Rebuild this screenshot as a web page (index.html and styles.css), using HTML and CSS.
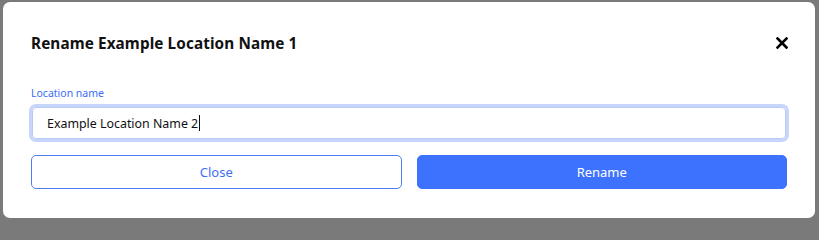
FILE: index.html
```html
<!DOCTYPE html>
<html lang="en">
<head>
<meta charset="utf-8">
<title>Rename location</title>
<link rel="stylesheet" href="styles.css">
</head>
<body>
<div class="backdrop">
  <div class="modal" role="dialog" aria-labelledby="modal-title">
    <div class="modal-header">
      <h2 id="modal-title" class="modal-title">Rename Example Location Name 1</h2>
      <button class="close-x" aria-label="Close">
        <svg width="12" height="12" viewBox="0 0 12 12"><path d="M1.5 1.5 L10.5 10.5 M10.5 1.5 L1.5 10.5" stroke="#000" stroke-width="2.6" stroke-linecap="square"/></svg>
      </button>
    </div>
    <label class="field-label" for="loc">Location name</label>
    <div class="input-ring">
      <div class="input" id="loc">Example Location Name 2<span class="caret"></span></div>
    </div>
    <div class="actions">
      <button class="btn btn-outline">Close</button>
      <button class="btn btn-primary">Rename</button>
    </div>
  </div>
</div>
</body>
</html>
```
FILE: styles.css
```css
html, body {
  margin: 0;
  padding: 0;
}
body {
  background: #7a7a7a;
  font-family: "Noto Sans", "Open Sans", sans-serif;
  min-height: 100vh;
}
.backdrop {
  padding: 2px 4px 4px 3px;
}
.modal {
  background: #fff;
  border-radius: 7px;
  padding: 28px 28px 29px 28px;
}
.modal-header {
  display: flex;
  align-items: center;
  justify-content: space-between;
  height: 26px;
}
.modal-title {
  margin: 0;
  font-size: 15.3px;
  font-weight: 700;
  color: #111;
  letter-spacing: 0.1px;
}
.close-x {
  border: 0;
  background: none;
  padding: 0;
  margin-right: -1px;
  width: 12px;
  height: 12px;
  display: flex;
}
.field-label {
  display: block;
  margin-top: 30px;
  font-size: 10.5px;
  line-height: 14px;
  color: #3b6cf7;
}
.input-ring {
  margin-top: 4px;
  margin-left: -2px;
  margin-right: -2px;
  border: 3px solid #c8d5fb;
  border-radius: 7px;
  background: #fff;
}
.input {
  border: 1px solid #b9c9f6;
  border-radius: 4px;
  height: 32px;
  box-sizing: border-box;
  padding: 0 0 0 14px;
  display: flex;
  align-items: center;
  font-size: 12.4px;
  color: #111;
}
.caret {
  display: inline-block;
  width: 1px;
  height: 16px;
  background: #111;
  margin-left: 1px;
}
.actions {
  margin-top: 13px;
  display: grid;
  grid-template-columns: 1fr 1fr;
  gap: 15px;
}
.btn {
  height: 34px;
  border-radius: 5px;
  font-family: inherit;
  font-size: 13px;
  cursor: pointer;
}
.btn-outline {
  background: #fff;
  border: 1px solid #4f7cf5;
  color: #3d6ef8;
}
.btn-primary {
  background: #3d72ff;
  border: 1px solid #3d72ff;
  color: #fff;
}
```
